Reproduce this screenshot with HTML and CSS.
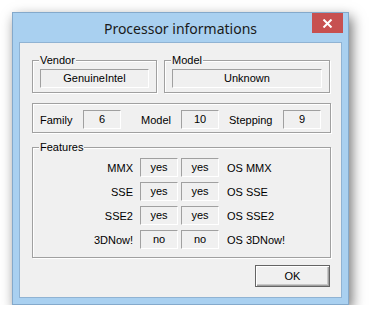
FILE: index.html
```html
<!DOCTYPE HTML>
<html>
<head>
  <meta name="viewport" content="width=device-width, initial-scale=1">
  <title>Processor informations</title>
  <link rel="stylesheet" href="styles.css">
</head>
<body>
  <div class="window">
    <div class="titlebar">
      <span class="title">Processor informations</span>
      <div class="close">
        <svg width="11" height="9" viewBox="0 0 11 9">
          <path d="M1.5 0.5 L9.5 8.5 M9.5 0.5 L1.5 8.5" stroke="#fff" stroke-width="2"/>
        </svg>
      </div>
    </div>

    <div class="client">
      <div class="top-row">
        <div class="group vendor">
          <span class="legend">Vendor</span>
          <div class="field">GenuineIntel</div>
        </div>
        <div class="group model">
          <span class="legend">Model</span>
          <div class="field">Unknown</div>
        </div>
      </div>

      <div class="group ids">
        <span class="label">Family</span>
        <div class="field">6</div>
        <span class="label gap-l">Model</span>
        <div class="field">10</div>
        <span class="label gap-s">Stepping</span>
        <div class="field">9</div>
      </div>

      <div class="group features">
        <span class="legend">Features</span>
        <div class="feat-row">
          <span class="feat-name">MMX</span>
          <div class="field small">yes</div>
          <div class="field small second">yes</div>
          <span class="os-name">OS MMX</span>
        </div>
        <div class="feat-row">
          <span class="feat-name">SSE</span>
          <div class="field small">yes</div>
          <div class="field small second">yes</div>
          <span class="os-name">OS SSE</span>
        </div>
        <div class="feat-row">
          <span class="feat-name">SSE2</span>
          <div class="field small">yes</div>
          <div class="field small second">yes</div>
          <span class="os-name">OS SSE2</span>
        </div>
        <div class="feat-row">
          <span class="feat-name">3DNow!</span>
          <div class="field small">no</div>
          <div class="field small second">no</div>
          <span class="os-name">OS 3DNow!</span>
        </div>
      </div>

      <div class="buttons">
        <button class="button">OK</button>
      </div>
    </div>
  </div>
</body>
</html>
```

FILE: styles.css
```css
body {
  margin: 0;
  padding: 12px 0 0 12px;
  background-color: #fff;
  font-family: "Liberation Sans", Arial, sans-serif;
  font-size: 11px;
  color: #000;
}

.window {
  width: 337px;
  box-sizing: border-box;
  background-color: #a9d0f0;
  border: 1px solid #84a9cb;
  padding: 0 6px 6px 6px;
  box-shadow: 3px 5px 12px rgba(0,0,0,0.55);
}

.titlebar {
  position: relative;
  height: 29px;
  text-align: center;
}

.title {
  display: inline-block;
  margin-top: 6px;
  font-family: "Noto Sans", "Open Sans", sans-serif;
  font-size: 14px;
  line-height: 20px;
  color: #1a1a1a;
}

.close {
  position: absolute;
  top: 0;
  right: -1px;
  width: 31px;
  height: 20px;
  background-color: #c75050;
  display: flex;
  align-items: center;
  justify-content: center;
}

.client {
  background-color: #f0f0f0;
  border: 1px solid #90b3d3;
  padding: 17px 10px 10px 12px;
}

.top-row {
  display: flex;
  gap: 7px;
}

.group {
  position: relative;
  border: 1px solid #a0a0a0;
  box-shadow: inset 1px 1px 0 #fff, 1px 1px 0 #fff;
}

.legend {
  position: absolute;
  top: -7px;
  left: 6px;
  padding: 0 1px;
  line-height: 13px;
  background-color: #f0f0f0;
}

.vendor {
  width: 109px;
  padding: 8px 7px 4px 7px;
}

.model {
  width: 150px;
  padding: 8px 7px 4px 7px;
}

.field {
  height: 19px;
  box-sizing: border-box;
  border: 1px solid;
  border-color: #a0a0a0 #fff #fff #a0a0a0;
  text-align: center;
  line-height: 17px;
}

.ids {
  margin-top: 10px;
  display: flex;
  align-items: center;
  padding: 6px 8px 3px 7px;
  height: 19px;
}

.ids .field {
  width: 38px;
}

.label {
  width: 43px;
}

.label.gap-l {
  width: 40px;
  padding-left: 20px;
}

.label.gap-s {
  width: 54px;
  padding-left: 10px;
}

.features {
  margin-top: 14px;
  padding: 10px 8px 8px 7px;
  display: flex;
  flex-direction: column;
  gap: 5px;
}

.feat-row {
  display: flex;
  align-items: center;
}

.feat-name {
  width: 93px;
  text-align: right;
  margin-right: 7px;
}

.field.small {
  width: 38px;
}

.field.second {
  margin-left: 3px;
}

.os-name {
  margin-left: 8px;
}

.buttons {
  display: flex;
  justify-content: flex-end;
  margin-top: 7px;
}

.button {
  width: 75px;
  height: 22px;
  margin-right: 1px;
  padding: 0;
  font-family: "Liberation Sans", Arial, sans-serif;
  font-size: 11px;
  color: #000;
  background-color: #f0f0f0;
  border: 1px solid #646464;
  box-shadow: inset 1px 1px 0 #fff, inset -1px -1px 0 #a0a0a0, inset -2px -2px 0 #c8c8c8;
}
```
